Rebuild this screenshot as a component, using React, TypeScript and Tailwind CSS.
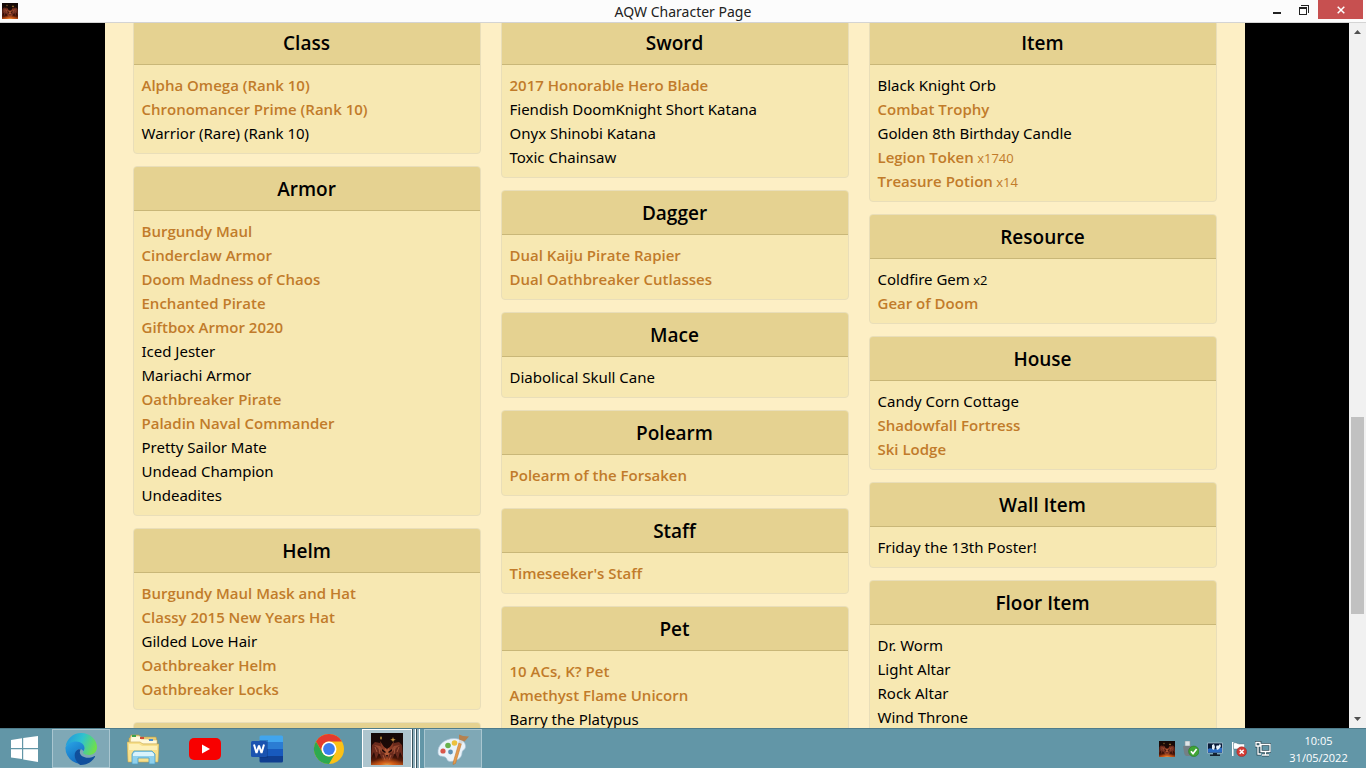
import { useId } from "react";
import type { ReactNode } from "react";

type Item = { name: string; member?: boolean; qty?: number };
type Section = { title: string; items: Item[] };

const m = (name: string, qty?: number): Item => ({ name, member: true, qty });
const f = (name: string, qty?: number): Item => ({ name, qty });

const columns: Section[][] = [
  [
    {
      title: "Class",
      items: [m("Alpha Omega (Rank 10)"), m("Chronomancer Prime (Rank 10)"), f("Warrior (Rare) (Rank 10)")],
    },
    {
      title: "Armor",
      items: [
        m("Burgundy Maul"),
        m("Cinderclaw Armor"),
        m("Doom Madness of Chaos"),
        m("Enchanted Pirate"),
        m("Giftbox Armor 2020"),
        f("Iced Jester"),
        f("Mariachi Armor"),
        m("Oathbreaker Pirate"),
        m("Paladin Naval Commander"),
        f("Pretty Sailor Mate"),
        f("Undead Champion"),
        f("Undeadites"),
      ],
    },
    {
      title: "Helm",
      items: [
        m("Burgundy Maul Mask and Hat"),
        m("Classy 2015 New Years Hat"),
        f("Gilded Love Hair"),
        m("Oathbreaker Helm"),
        m("Oathbreaker Locks"),
      ],
    },
    { title: "", items: [] },
  ],
  [
    {
      title: "Sword",
      items: [
        m("2017 Honorable Hero Blade"),
        f("Fiendish DoomKnight Short Katana"),
        f("Onyx Shinobi Katana"),
        f("Toxic Chainsaw"),
      ],
    },
    { title: "Dagger", items: [m("Dual Kaiju Pirate Rapier"), m("Dual Oathbreaker Cutlasses")] },
    { title: "Mace", items: [f("Diabolical Skull Cane")] },
    { title: "Polearm", items: [m("Polearm of the Forsaken")] },
    { title: "Staff", items: [m("Timeseeker's Staff")] },
    { title: "Pet", items: [m("10 ACs, K? Pet"), m("Amethyst Flame Unicorn"), f("Barry the Platypus")] },
  ],
  [
    {
      title: "Item",
      items: [
        f("Black Knight Orb"),
        m("Combat Trophy"),
        f("Golden 8th Birthday Candle"),
        m("Legion Token", 1740),
        m("Treasure Potion", 14),
      ],
    },
    { title: "Resource", items: [f("Coldfire Gem", 2), m("Gear of Doom")] },
    { title: "House", items: [f("Candy Corn Cottage"), m("Shadowfall Fortress"), m("Ski Lodge")] },
    { title: "Wall Item", items: [f("Friday the 13th Poster!")] },
    { title: "Floor Item", items: [f("Dr. Worm"), f("Light Altar"), f("Rock Altar"), f("Wind Throne")] },
  ],
];

function Card({ title, items }: Section) {
  return (
    <section className="shrink-0 overflow-hidden rounded border border-[#e9deb9] bg-[#f7e8b2]">
      <h2 className="h-11 border-b border-[#c9b778] bg-[#e5d291] text-center text-[19px] leading-[44px] font-semibold text-black">
        {title}
      </h2>
      <ul className="p-2 text-[15px] leading-6">
        {items.map((item) => (
          <li key={item.name} className={item.member ? "text-[#c17b2a]" : "text-black"}>
            <span className={item.member ? "font-semibold" : "font-['Segoe_UI','Noto_Sans',sans-serif]"}>
              {item.name}
            </span>
            {item.qty !== undefined && <span className="text-[13px] leading-none"> x{item.qty}</span>}
          </li>
        ))}
      </ul>
    </section>
  );
}

function DragonIcon({ className }: { className: string }) {
  const id = useId();
  return (
    <svg viewBox="0 0 32 32" className={className} aria-hidden="true">
      <defs>
        <linearGradient id={`${id}bg`} x1="0" y1="0" x2="0" y2="1">
          <stop offset="0" stopColor="#140907" />
          <stop offset="0.65" stopColor="#220a06" />
          <stop offset="0.86" stopColor="#5c1c08" />
          <stop offset="1" stopColor="#b04a14" />
        </linearGradient>
        <radialGradient id={`${id}glow`} cx="0.5" cy="1" r="0.5">
          <stop offset="0" stopColor="#ffc35a" />
          <stop offset="0.4" stopColor="#ee6c1c" />
          <stop offset="1" stopColor="#ee6c1c" stopOpacity="0" />
        </radialGradient>
      </defs>
      <rect width="32" height="32" fill={`url(#${id}bg)`} />
      <path d="M1 12 4 9l5 1 4 4 3 2 3-2 4-4 5-1 3 3 1 13-3-6-2 7-3-6-3 6-5 5-5-5-3-6-3 6-2-7-3 6z" fill="#6a2a1c" />
      <path d="M3 12l6 1 5 5-2 2-5-5zM29 12l-6 1-5 5 2 2 5-5z" fill="#97482f" />
      <path d="M9 8l4 6 3 2 3-2 4-6-2 9-2 3-3 8-3-8-2-3z" fill="#8a3b25" />
      <path d="M14 15l2 2 2-2 1 4-3 6-3-6z" fill="#b35c38" />
      <path d="M4 14l2 5M28 14l-2 5M8 15l1 6M24 15l-1 6M12 22l2 5M20 22l-2 5" stroke="#a4553a" fill="none" />
      <path d="M11 16l4 3-1 1-3-2zM21 16l-4 3 1 1 3-2zM15 22h2l-1 3z" fill="#1d0806" />
      <path d="M10 3l1 2-1 2-1-2zM22 4l.7 2 2 .7-2 .7L22 9l-.7-1.600-2-.7 2-.7z" fill="#c9973f" />
      <rect y="16" width="32" height="16" fill={`url(#${id}glow)`} opacity=".7" />
    </svg>
  );
}

function StartIcon() {
  return (
    <svg viewBox="0 0 27 26" className="h-[26px] w-[27px]" fill="#fff" aria-hidden="true">
      <path d="M0 4 11 2.2V12H0zM12.2 2 27 0v12H12.200zM0 13.200h11v9.900L0 21.500zM12.200 13.200H27V26l-14.800-2.600z" />
    </svg>
  );
}

function EdgeIcon() {
  const id = useId();
  return (
    <svg viewBox="0 0 32 32" className="size-8" aria-hidden="true">
      <defs>
        <linearGradient id={`${id}a`} x1="0" y1="0.2" x2="1" y2="0.5">
          <stop offset="0" stopColor="#2397dc" />
          <stop offset="0.5" stopColor="#2fc2cf" />
          <stop offset="1" stopColor="#6fe04a" />
        </linearGradient>
        <linearGradient id={`${id}b`} x1="0" y1="0" x2="0.6" y2="1">
          <stop offset="0" stopColor="#2aa6e6" />
          <stop offset="1" stopColor="#1166bd" />
        </linearGradient>
      </defs>
      <path d="M.6 13.500C1.600 6 8 0 16 0c9.500 0 16 7 16 14.200 0 5-4 7.800-8.400 7.800-4 0-5.600-1.400-5.600-2.400 0-.9 1.500-1.500 1.500-4.100 0-3.600-3.500-6-8-6C6.500 9.500 2.500 11.500.6 13.500z" fill={`url(#${id}a)`} />
      <path d="M.4 14.500C2 10.500 6.500 8.400 11 8.400c5 0 8.500 3 8.500 6.600 0 1.400-.6 2.500-1.100 3.200-1.200-2.400-4-3-5.900-1.500-2.500 2-2.300 6.800 1.200 10 2.800 2.500 6.300 3.300 9.300 2.700A16 16 0 0 1 .4 14.500z" fill={`url(#${id}b)`} />
      <path d="M12.500 16.700c-3.800 2-4.500 10 2.600 15.200 6.400.3 12-3 14.800-8 .3-.6-.1-1-.7-.7-7 3.600-14 .4-14.400-3.700-.1-1.200.3-2.200.9-3-1.100-.4-2.200-.3-3.200.2z" fill="#104f9c" />
    </svg>
  );
}

function ExplorerIcon() {
  return (
    <svg viewBox="0 0 32 32" className="size-8" aria-hidden="true">
      <path d="M3 5 4 2h8l1 2h16l1 4v20H2V5z" fill="#e9cf78" stroke="#b99b45" strokeWidth=".6" />
      <path d="M4 3h9l1 3h7l1 1h8v4H3z" fill="#fff9dc" stroke="#c7ad60" strokeWidth=".5" />
      <path d="M5 2h4v2H5z" fill="#39a34a" />
      <path d="M13 4h4v2h-4z" fill="#d34b35" />
      <path d="M22 6h4v2h-4z" fill="#4c8fd0" />
      <path d="M0 9h13l3 2h16l-1 18H1z" fill="#f7e08c" stroke="#c9a94f" strokeWidth=".6" />
      <path d="M2 11h10l3 2h15v4H2z" fill="#fdf0b8" />
      <path d="M5 31V21l2-3h18l3 3v10h-6v-6H11v6z" fill="#8ed0ec" stroke="#4e9fc4" strokeWidth=".8" />
      <path d="M6 21l2-2h17l2 2v2H6z" fill="#d9f3fc" />
    </svg>
  );
}

function YouTubeIcon() {
  return (
    <svg viewBox="0 0 32 32" className="size-8" aria-hidden="true">
      <rect y="5" width="32" height="22" rx="5" fill="#f80000" />
      <path d="M13 11.500v9l8-4.500z" fill="#fff" />
    </svg>
  );
}

function WordIcon() {
  return (
    <svg viewBox="0 0 32 32" className="size-8" aria-hidden="true">
      <path d="M10 2.500h20.500A1.500 1.500 0 0 1 32 4v6H8.500V4A1.500 1.500 0 0 1 10 2.500z" fill="#41a5ee" />
      <path d="M8.500 9H32v7H8.500z" fill="#2b7cd3" />
      <path d="M8.500 16H32v7H8.500z" fill="#185abd" />
      <path d="M8.500 23H32v5a1.500 1.500 0 0 1-1.500 1.500H10A1.500 1.500 0 0 1 8.500 28z" fill="#103f91" />
      <path d="M8.500 7H17v18H8.500z" fill="#0b3270" opacity=".35" />
      <rect y="8" width="16" height="16" rx="1.500" fill="#1a53b0" />
      <path d="M3 11.500 5.500 20 8 12.500 10.500 20 13 11.500" fill="none" stroke="#fff" strokeWidth="2" strokeLinejoin="bevel" />
    </svg>
  );
}

function ChromeIcon() {
  return (
    <svg viewBox="0 0 32 32" className="size-8" aria-hidden="true">
      <circle cx="16" cy="16" r="15" fill="#fbc116" />
      <path d="M3 8.500A15 15 0 0 1 29 8.500H16a7.500 7.500 0 0 0-6.500 11.250z" fill="#e33b2e" />
      <path d="M3 8.500 9.500 19.750A7.500 7.500 0 0 0 22.500 19.750L16 31A15 15 0 0 1 3 8.500z" fill="#2da94f" />
      <circle cx="16" cy="16" r="7.500" fill="#fff" />
      <circle cx="16" cy="16" r="5.900" fill="#3b7ded" />
    </svg>
  );
}

function PaintIcon() {
  return (
    <svg viewBox="0 0 32 32" className="size-8" aria-hidden="true">
      <path d="M1 20C0 12 8 5.500 17 5.500c7 0 12 3.500 11.500 8.500-.4 3-3.500 3-3.500 6 0 5-6 8.500-12 8.500-3.500 0-2.500-3.500-5-4.500S1.500 24 1 20z" fill="#eaf3fa" stroke="#a9c3d6" strokeWidth=".7" />
      <circle cx="6" cy="18" r="2.600" fill="#d9564a" />
      <circle cx="11" cy="12.500" r="2.800" fill="#68b14c" />
      <circle cx="17.500" cy="10" r="2.800" fill="#ecc13d" />
      <circle cx="13.500" cy="19" r="2.400" fill="#5f91b5" />
      <path d="M22 9.500 24.500 10.500 18.500 30.500l-2.500 1 .3-2.500z" fill="#e59a4c" stroke="#b86f2b" strokeWidth=".5" />
      <path d="M22.500 6 26.500 7.500l-1.500 3.500-3.500-1.500z" fill="#d4d8dc" />
      <path d="M22 1.500 26 3l6 .5-4.500 5-5.500-2z" fill="#b58150" />
    </svg>
  );
}

function UsbIcon() {
  return (
    <svg viewBox="0 0 16 16" className="size-4" aria-hidden="true">
      <path d="M2 0h5v5H2z" fill="#dfe5e8" stroke="#8e979c" strokeWidth=".6" />
      <path d="M0 5h9v6c0 2-1 3-2 4H3c-1-1-2-2-2-4z" fill="#747f85" />
      <circle cx="10.800" cy="10.300" r="5.200" fill="#3fa535" stroke="#267a22" strokeWidth=".6" />
      <path d="m8 10.300 2 2.400 3.600-4.700" fill="none" stroke="#fff" strokeWidth="1.700" />
    </svg>
  );
}

function DisplayIcon() {
  return (
    <svg viewBox="0 0 16 16" className="size-4" aria-hidden="true">
      <path d="M.5 2h15v10H.5z" fill="#081b38" stroke="#b7cedb" strokeWidth=".7" />
      <path d="M6 12h4v1.500h3V15H3v-1.500h3z" fill="#16222f" />
      <path d="M1 8c3-2 5 1 8 0s4-2 6-1v4.500H1z" fill="#2a6cc4" />
      <path d="M5 4l2-1 1 3-1 3-2-1zM9 6l1-2 1 1 2-2 1 2-2 3-2 1z" fill="#e6f1fa" />
    </svg>
  );
}

function FlagIcon() {
  return (
    <svg viewBox="0 0 16 16" className="size-4" aria-hidden="true">
      <path d="M1 1h1.500v14H1z" fill="#fff" />
      <path d="M2.500 2c3-1 4 1 6 1h5v6c-3 1-5-1-7-1h-4z" fill="#fff" stroke="#44626d" strokeWidth=".4" />
      <circle cx="10.700" cy="10.700" r="4.900" fill="#d43c35" stroke="#8f2723" strokeWidth=".5" />
      <path d="m8.700 8.700 4 4m0-4-4 4" stroke="#fff" strokeWidth="1.500" />
    </svg>
  );
}

function NetworkIcon() {
  return (
    <svg viewBox="0 0 16 16" className="size-4" fill="none" aria-hidden="true">
      <g stroke="#2c4b57" strokeWidth="2.800">
        <path d="M6 3.500h9v7H6zM10.500 11v3M7 14h7M1 1.500h4v3.500H1zM3 5v8h3" />
      </g>
      <g stroke="#fff" strokeWidth="1.300">
        <path d="M6 3.500h9v7H6zM10.500 11v3M7 14h7M1 1.500h4v3.500H1zM3 5v8h3" />
      </g>
    </svg>
  );
}

function TaskButton({ label, open, children }: { label: string; open?: boolean; children: ReactNode }) {
  return (
    <button
      type="button"
      aria-label={label}
      className={
        open
          ? "flex h-[39px] w-[58px] items-center justify-center border border-[#a9c6d0] bg-[#7fa8b6]"
          : "flex h-[39px] w-[58px] items-center justify-center"
      }
    >
      {children}
    </button>
  );
}

function ActiveTaskButton() {
  return (
    <button type="button" aria-label="AQW Character Page" className="flex h-[39px] w-[58px] bg-[#36505b]">
      <span className="flex h-full flex-1 items-center justify-center border border-white bg-[#adc5ce]">
        <DragonIcon className="size-8" />
      </span>
      <span className="ml-px h-full w-[3px] border-r border-white bg-[#8fb0bc]" />
      <span className="ml-px h-full w-[3px] border-r border-white bg-[#8fb0bc]" />
    </button>
  );
}

export default function App() {
  return (
    <div className="flex h-screen flex-col overflow-hidden bg-black font-['Segoe_UI','Open_Sans','Noto_Sans',sans-serif]">
      <header className="grid h-[23px] shrink-0 grid-cols-[1fr_auto_1fr] border-b border-[#d4d4d4] bg-[#fcfcfc]">
        <div className="pt-[3px] pl-0.5">
          <DragonIcon className="size-4" />
        </div>
        <h1 className="font-['Segoe_UI','Noto_Sans',sans-serif] text-sm leading-[23px] text-[#222]">
          AQW Character Page
        </h1>
        <div className="flex items-start justify-end pr-[3px]">
          <button type="button" aria-label="Minimize" className="flex h-[19px] w-[26px] items-center justify-center">
            <svg viewBox="0 0 12 12" className="size-3" aria-hidden="true">
              <path d="M2 8h8v2H2z" fill="#222" />
            </svg>
          </button>
          <button type="button" aria-label="Restore" className="flex h-[19px] w-7 items-center justify-center">
            <svg viewBox="0 0 12 12" className="size-3" aria-hidden="true">
              <path d="M3 1h8v8h-1V2H3z" fill="#222" />
              <path d="M1 3h8v8H1zM2 5v5h6V5z" fill="#222" fillRule="evenodd" />
            </svg>
          </button>
          <button type="button" aria-label="Close" className="flex h-[19px] w-[45px] items-center justify-center bg-[#c75050]">
            <svg viewBox="0 0 8 8" className="size-2" aria-hidden="true">
              <path d="m.7.7 6.600 6.600M7.300.7.7 7.300" stroke="#fff" strokeWidth="1.500" />
            </svg>
          </button>
        </div>
      </header>

      <div className="flex min-h-0 flex-1 overflow-hidden">
        <main className="min-w-0 flex-1 overflow-hidden">
          <div className="mx-auto h-full max-w-[1140px] overflow-hidden bg-[#fdefc5] px-7">
            <div className="-mt-[3px] grid grid-cols-3 gap-5">
              {columns.map((sections, index) => (
                <div key={index} className="flex min-w-0 flex-col gap-3">
                  {sections.map((section) => (
                    <Card key={section.title} {...section} />
                  ))}
                </div>
              ))}
            </div>
          </div>
        </main>
        <div className="flex w-[17px] shrink-0 flex-col items-center justify-between bg-[#f1f1f1]">
          <svg viewBox="0 0 17 17" className="size-[17px] shrink-0" aria-hidden="true">
            <path d="M5 11h7L8.500 7z" fill="#505050" />
          </svg>
          <div className="flex min-h-0 w-full flex-1 flex-col px-0.5">
            <div className="flex-[377]" />
            <div className="flex-[197] bg-[#c1c1c1]" />
            <div className="flex-[97]" />
          </div>
          <svg viewBox="0 0 17 17" className="size-[17px] shrink-0" aria-hidden="true">
            <path d="M5 6h7l-3.500 4z" fill="#505050" />
          </svg>
        </div>
      </div>

      <footer className="flex h-10 shrink-0 items-center justify-between border-t border-[#4f7c8b] bg-[#6296a7]">
        <nav aria-label="Taskbar" className="flex items-center gap-1">
          <button type="button" aria-label="Start" className="flex h-[39px] w-12 items-center justify-center">
            <StartIcon />
          </button>
          <TaskButton label="Edge" open>
            <EdgeIcon />
          </TaskButton>
          <TaskButton label="File Explorer">
            <ExplorerIcon />
          </TaskButton>
          <TaskButton label="YouTube">
            <YouTubeIcon />
          </TaskButton>
          <TaskButton label="Word">
            <WordIcon />
          </TaskButton>
          <TaskButton label="Chrome">
            <ChromeIcon />
          </TaskButton>
          <ActiveTaskButton />
          <TaskButton label="Paint" open>
            <PaintIcon />
          </TaskButton>
        </nav>
        <div className="flex items-center">
          <div className="flex items-center gap-2">
            <DragonIcon className="size-4" />
            <UsbIcon />
            <DisplayIcon />
            <FlagIcon />
            <NetworkIcon />
          </div>
          <time dateTime="2022-05-31T10:05" className="flex w-[95px] flex-col items-center text-[11px] leading-[17px] text-white">
            <span>10:05</span>
            <span>31/05/2022</span>
          </time>
        </div>
      </footer>
    </div>
  );
}
